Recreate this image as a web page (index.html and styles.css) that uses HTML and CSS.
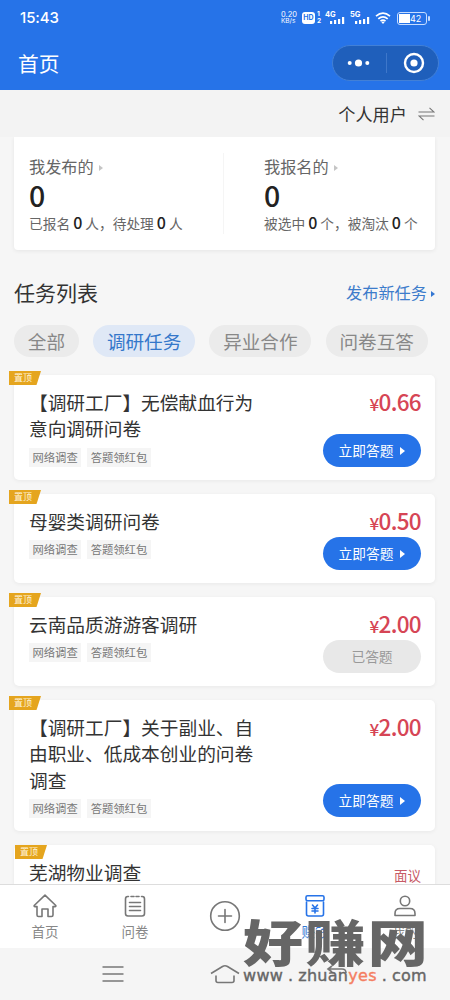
FILE: index.html
```html
<!DOCTYPE html>
<html lang="zh-CN">
<head>
<meta charset="utf-8">
<title>首页</title>
<link rel="stylesheet" href="styles.css">
</head>
<body>
<div class="app">
  <header class="header">
    <div class="status">
      <span class="clock">15:43</span>
      <div class="status-icons">
        <div class="speed"><span>0.20</span><span>KB/s</span></div>
        <div class="hd"><b>HD</b><div class="hd-num"><span>1</span><span>2</span></div></div>
        <div class="signal"><span>4G</span><svg width="15" height="8" viewBox="0 0 15 8"><path d="M0 5h2.2v3H0zM4 4h2.2v4H4zM8 3h2.2v5H8zM12 1h2.2v7H12z" fill="#fff"/></svg></div>
        <div class="signal"><span>5G</span><svg width="15" height="8" viewBox="0 0 15 8"><path d="M0 5h2.2v3H0zM4 4h2.2v4H4zM8 3h2.2v5H8zM12 1h2.2v7H12z" fill="#fff"/></svg></div>
        <svg class="wifi" width="16" height="12" viewBox="0 0 16 12"><g fill="none" stroke="#fff" stroke-width="1.7"><path d="M1 4.2Q8-1.8 15 4.2M3.3 6.8Q8 2.8 12.7 6.8M5.5 9.1Q8 7 10.500 9.1"/></g><path d="M6.3 10Q8 8.8 9.7 10L8 12z" fill="#fff"/></svg>
        <div class="battery"><span>42</span></div>
      </div>
    </div>
    <div class="titlebar">
      <h1 class="page-title">首页</h1>
      <div class="capsule">
        <svg width="23" height="10" viewBox="0 0 23 10"><g fill="#fff"><circle cx="2.7" cy="5" r="2"/><circle cx="11.5" cy="5" r="3.6"/><circle cx="20.3" cy="5" r="2"/></g></svg>
        <i class="capsule-line"></i>
        <svg width="22" height="22" viewBox="0 0 22 22"><circle cx="11" cy="11" r="9" fill="none" stroke="#fff" stroke-width="2.4"/><circle cx="11" cy="11" r="3.6" fill="#fff"/></svg>
      </div>
    </div>
  </header>

  <div class="role"><span>个人用户</span><svg width="17" height="14" viewBox="0 0 17 14"><path d="M.5 5H16L11.5.8M16.5 9H1l4.500 4.200" fill="none" stroke="#777" stroke-width="1.1"/></svg></div>

  <main class="main">
    <section class="summary">
      <div class="stat">
        <div class="stat-name">我发布的<i class="tri"></i></div>
        <div class="stat-value">0</div>
        <div class="stat-detail">已报名 <b>0</b> 人，待处理 <b>0</b> 人</div>
      </div>
      <div class="stat stat-right">
        <div class="stat-name">我报名的<i class="tri"></i></div>
        <div class="stat-value">0</div>
        <div class="stat-detail">被选中 <b>0</b> 个，被淘汰 <b>0</b> 个</div>
      </div>
    </section>

    <div class="list-head"><h2>任务列表</h2><a class="publish">发布新任务<i class="tri"></i></a></div>

    <div class="tabs">
      <span class="tab">全部</span><span class="tab active">调研任务</span><span class="tab">异业合作</span><span class="tab">问卷互答</span>
    </div>

    <div class="tasks">
      <article class="task">
        <span class="pin">置顶</span>
        <div class="task-info"><h3>【调研工厂】无偿献血行为意向调研问卷</h3><div class="tags"><span>网络调查</span><span>答题领红包</span></div></div>
        <div class="task-side"><div class="price"><small>¥</small>0.66</div><a class="btn">立即答题<i class="tri"></i></a></div>
      </article>
      <article class="task">
        <span class="pin">置顶</span>
        <div class="task-info"><h3>母婴类调研问卷</h3><div class="tags"><span>网络调查</span><span>答题领红包</span></div></div>
        <div class="task-side"><div class="price"><small>¥</small>0.50</div><a class="btn">立即答题<i class="tri"></i></a></div>
      </article>
      <article class="task">
        <span class="pin">置顶</span>
        <div class="task-info"><h3>云南品质游游客调研</h3><div class="tags"><span>网络调查</span><span>答题领红包</span></div></div>
        <div class="task-side"><div class="price"><small>¥</small>2.00</div><a class="btn done">已答题</a></div>
      </article>
      <article class="task tall">
        <span class="pin">置顶</span>
        <div class="task-info"><h3>【调研工厂】关于副业、自由职业、低成本创业的问卷调查</h3><div class="tags"><span>网络调查</span><span>答题领红包</span></div></div>
        <div class="task-side"><div class="price"><small>¥</small>2.00</div><a class="btn">立即答题<i class="tri"></i></a></div>
      </article>
      <article class="task">
        <span class="pin pin-inside">置顶</span>
        <div class="task-info"><h3>芜湖物业调查</h3></div>
        <div class="task-side"><div class="negotiable">面议</div></div>
      </article>
    </div>
  </main>

  <nav class="nav">
    <a><svg width="24" height="24" viewBox="0 0 24 24"><path d="M12 1.200 1.200 11.500q-.4 1.100.8 1.100H4V21q0 1.500 1.500 1.500H9V15h6v7.500h3.500Q20 22.500 20 21v-8.400h2q1.200 0 .8-1.100z"/></svg>首页</a>
    <a><svg width="24" height="24" viewBox="0 0 24 24"><path d="M5.500 2.500H4.700Q2.500 2.500 2.500 5v14.500q0 2.500 2.500 2.500h14q2.500 0 2.500-2.500V5q0-2.500-2.200-2.500h-.8M8 2.500h3M13 2.500h3M6.500 8.500h11M6.500 12.500h11M6.500 16.500h11"/></svg>问卷</a>
    <a class="plus"><svg width="32" height="32" viewBox="0 0 32 32"><path d="M16 9.500v13M9.500 16h13"/><circle cx="16" cy="16" r="14.300"/></svg></a>
    <a class="current"><svg width="24" height="24" viewBox="0 0 24 24"><rect x="3" y="1.700" width="18" height="5" rx="1.500"/><path d="M3.500 8v12q0 2 2 2h13q2 0 2-2V8M9.500 11l2.500 3 2.500-3M9 14.500h6M9 17h6M12 14v5"/></svg>赚钱</a>
    <a><svg width="24" height="24" viewBox="0 0 24 24"><circle cx="12" cy="7" r="4.700"/><path d="M2 21.500v-2Q2 14.500 7 14.500h10q5 0 5 5v2z"/></svg>我的</a>
  </nav>

  <div class="system">
    <svg width="22" height="18" viewBox="0 0 22 18"><path d="M.5 2h21M.5 9h21M.5 16h21"/></svg>
    <svg width="30" height="22" viewBox="0 0 30 22"><path d="M1 10.500 12.500 3.500Q15 2 17.500 3.500L29 10.500M6 12.500v5q0 2 2 2h14q2 0 2-2v-5"/></svg>
    <svg width="22" height="18" viewBox="0 0 22 18"><path d="M2 4h14q4 0 4 4M6 1 2 4l4 3"/></svg>
  </div>

  <div class="watermark"><div class="mark-name">好赚网</div><div class="mark-url"><span>www</span><span>.</span><span>zhuan<em>yes</em></span><span>.</span><span>com</span></div></div>
</div>
</body>
</html>
```

FILE: styles.css
```css
* { box-sizing: border-box; }
body { margin: 0; font-family: "Noto Sans CJK SC", sans-serif; color: #333; }
h1, h2, h3 { margin: 0; font-weight: 400; }
svg { display: block; flex: none; }
.app { position: relative; width: 450px; height: 1000px; display: flex; flex-direction: column; background: #f6f6f6; overflow: hidden; }
.header { flex: none; height: 90px; background: #2673e8; color: #fff; }
.status { height: 36px; padding: 0 20px; display: flex; align-items: center; justify-content: space-between; }
.clock { font: 500 15px/18px Inter, sans-serif; letter-spacing: -.1px; }
.status-icons { display: flex; align-items: center; font-family: Inter, sans-serif; }
.speed { width: 17px; margin-right: 4px; display: flex; flex-direction: column; font-size: 7.500px; line-height: 6.500px; }
.speed span:last-child { font-size: 6.500px; }
.hd { display: flex; align-items: center; gap: 2px; width: 23px; }
.hd b { width: 13px; height: 12px; border-radius: 3px; background: #fff; color: #2673e8; text-align: center; line-height: 12px; font-size: 7px; }
.hd-num { display: flex; flex-direction: column; font-size: 6.500px; line-height: 7px; font-weight: 700; }
.signal { width: 25px; height: 14px; padding-bottom: 1px; display: flex; align-items: flex-end; font-size: 7.500px; line-height: 7px; font-weight: 700; }
.signal span { align-self: flex-start; width: 5px; }
.wifi { margin: 0 6px 0 0; }
.battery { position: relative; width: 30px; height: 13px; margin-right: 3px; border: 1px solid #c7ddff; border-radius: 3px; background: linear-gradient(#fff, #fff) 1px 1px / 11px 9px no-repeat; }
.battery::after { content: ""; position: absolute; right: -4px; top: 3px; width: 2px; height: 5px; background: #c7ddff; border-radius: 1px; }
.battery span { display: block; padding-left: 12px; font-size: 9px; line-height: 11px; }
.titlebar { height: 54px; padding: 0 11px 0 18px; display: flex; align-items: center; justify-content: space-between; }
.page-title { font-size: 20.700px; line-height: 28px; }
.capsule { width: 107px; height: 36px; border: 1px solid #4280d6; border-radius: 18px; background: #1f5fbb; display: flex; align-items: center; justify-content: space-between; padding: 0 13px 0 14px; }
.capsule-line { width: 1px; height: 20px; background: #3e77ca; }
.role { flex: none; height: 47px; padding: 0 15px; background: #f3f3f3; display: flex; align-items: center; justify-content: flex-end; gap: 11px; font-size: 17.200px; line-height: 24px; }
.main { flex: 1; min-height: 0; padding: 0 15px 0 14px; overflow: hidden; }
.summary { height: 113px; padding: 16px 15px 0; border-radius: 0 0 4px 4px; background: #fff; box-shadow: 0 1px 4px rgba(0,0,0,.07); display: grid; grid-template-columns: 194px 1fr; }
.stat-right { height: 81px; padding-left: 40px; border-left: 1px solid #f5f5f5; }
.stat-name { display: flex; align-items: center; gap: 5px; font-size: 16.200px; line-height: 26px; color: #666; }
.tri { width: 0; height: 0; border: 3.500px solid transparent; border-left: 4px solid #c5c5c5; border-right: 0; }
.stat-name .tri { margin-top: 3px; }
.stat-value { height: 33px; font-size: 28.500px; line-height: 32px; font-weight: 500; color: #222; }
.stat-detail { font-size: 13.700px; line-height: 20px; color: #666; white-space: nowrap; }
.stat-detail b { font-size: 16px; font-weight: 500; color: #222; }
.list-head { height: 75px; padding-top: 9px; display: flex; align-items: center; justify-content: space-between; }
.list-head h2 { font-size: 21px; line-height: 30px; }
.publish { display: flex; align-items: center; gap: 4px; color: #3d7ccb; font-size: 16.200px; }
.publish .tri { margin-top: 3px; border-left-color: #3477d2; }
.tabs { display: flex; gap: 14.300px; }
.tab { height: 32px; padding: 0 13.800px; border-radius: 16px; background: #ebebeb; color: #888; font-size: 18.600px; line-height: 32px; }
.tab.active { background: #dfe8f6; color: #3477ca; }
.tasks { padding-top: 18px; display: flex; flex-direction: column; gap: 14px; }
.task { position: relative; min-height: 89px; padding: 14px 14px 13px 15px; border-radius: 5px; background: #fff; box-shadow: 0 1px 4px rgba(0,0,0,.06); display: flex; justify-content: space-between; }
.task:first-child { min-height: 105px; }
.task.tall { height: 131px; }
.task-info { width: 230px; }
.task h3 { font-size: 18.700px; line-height: 26.300px; color: #333; }
.tags { display: flex; gap: 6px; padding-top: 6px; }
.tags span { height: 19px; padding: 0 3.500px; background: #f5f5f5; color: #777; font-size: 11.300px; line-height: 18px; }
.task-side { display: flex; flex-direction: column; align-items: flex-end; justify-content: space-between; }
.price { color: #d64555; font-size: 22.500px; line-height: 25px; height: 26px; font-weight: 500; letter-spacing: -.7px; }
.price small { font-size: 17px; }
.btn { width: 98px; height: 33px; border-radius: 17px; background: #2673e8; color: #fff; display: flex; align-items: center; justify-content: center; gap: 7px; font-size: 13.700px; line-height: 31px; }
.btn .tri { border-width: 4px 0 4px 5px; border-left-color: #fff; }
.btn.done { background: #e8e8e8; color: #999; }
.task.tall .btn { margin-bottom: 1px; flex: none; }
.negotiable { color: #c75a65; font-size: 13.500px; line-height: 32px; }
.pin { position: absolute; left: -5px; top: -4px; width: 32px; height: 14px; padding-left: 5px; background: #e5a51e; clip-path: polygon(0 0, 100% 0, 86% 100%, 0 100%); color: #fff4da; font-size: 9px; line-height: 14px; }
.pin-inside { left: 1px; top: 0; }
.nav { flex: none; height: 64px; border-top: 1px solid #ddd; background: #fff; display: grid; grid-template-columns: repeat(5, 1fr); }
.nav a { display: flex; flex-direction: column; align-items: center; padding-top: 9px; gap: 2px; color: #888; font-size: 13.500px; line-height: 22px; }
.nav svg { fill: none; stroke: #777; stroke-width: 1.6; stroke-linejoin: round; stroke-linecap: round; }
.nav .plus { padding-top: 15px; }
.nav .current { color: #3477d2; }
.nav .current svg { stroke: #2673e8; }
.system { flex: none; height: 52px; padding: 0 102px; background: #f5f5f5; display: flex; align-items: center; justify-content: space-between; }
.system svg { fill: none; stroke: #777; stroke-width: 1.6; }
.watermark { position: absolute; left: 243px; top: 912px; width: 190px; color: #666; }
.mark-name { width: 160px; height: 55px; font-size: 50px; line-height: 56px; font-weight: 900; letter-spacing: 2px; white-space: nowrap; transform: scaleX(1.2); transform-origin: 0 0; }
.mark-url { width: 184px; display: flex; justify-content: space-between; font: 16px/18px "DejaVu Sans", sans-serif; letter-spacing: .3px; -webkit-text-stroke: .4px currentColor; }
.mark-url em { font-style: normal; color: #f47e62; }
```
